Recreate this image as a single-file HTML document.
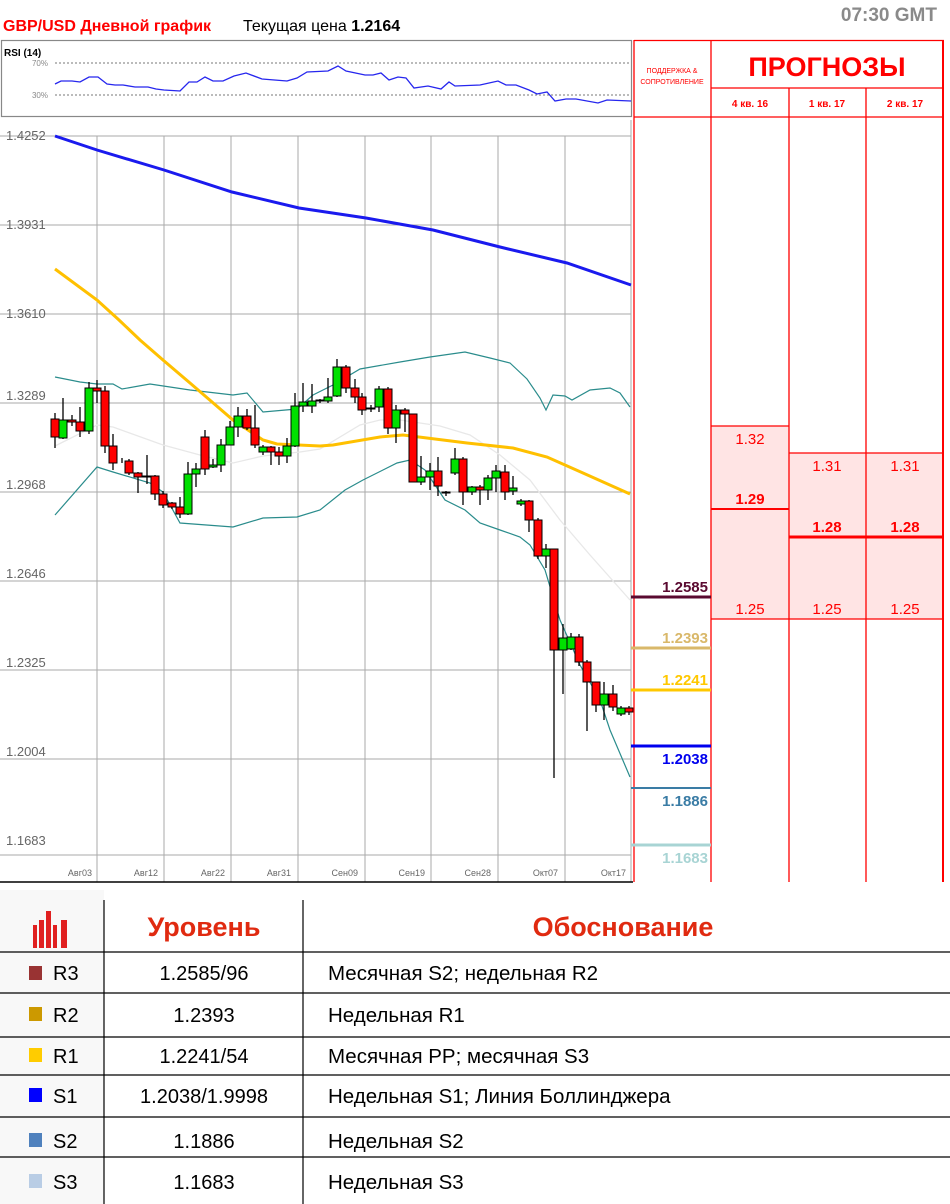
<!DOCTYPE html>
<html><head><meta charset="utf-8"><style>
body{margin:0;width:950px;height:1204px;background:#fff;overflow:hidden;font-family:"Liberation Sans","DejaVu Sans",sans-serif;position:relative}
.a{position:absolute;white-space:nowrap}
</style></head><body>
<svg class="a" style="left:0;top:0" width="950" height="890" xmlns="http://www.w3.org/2000/svg" font-family="Liberation Sans, DejaVu Sans, sans-serif">
<text x="3" y="31" font-size="16" font-weight="bold" fill="#ff0000">GBP/USD Дневной график</text>
<text x="243" y="31" font-size="16" fill="#000">Текущая цена <tspan font-weight="bold">1.2164</tspan></text>
<text x="937" y="21" font-size="19" font-weight="bold" fill="#8a8a8a" text-anchor="end">07:30 GMT</text>
<rect x="1.5" y="40.5" width="630" height="76" fill="#fff" stroke="#888" stroke-width="1.2"/>
<text x="4" y="56" font-size="10" font-weight="bold" fill="#000">RSI (14)</text>
<text x="48" y="66" font-size="8" fill="#888" text-anchor="end">70%</text>
<text x="48" y="98" font-size="8" fill="#888" text-anchor="end">30%</text>
<line x1="55" y1="63" x2="631" y2="63" stroke="#777" stroke-dasharray="2,2"/>
<line x1="55" y1="95" x2="631" y2="95" stroke="#777" stroke-dasharray="2,2"/>
<polyline fill="none" stroke="#2626ee" stroke-width="1.3" points="55,84 61,81 72,81 80,82 89,77 98,77 107,84 115,85 123,85 135,87 148,87 156,89 164,90 180,91 189,82 197,82 205,77 213,81 223,81 234,76 246,73 262,79 287,81 297,78 307,72 328,71 338,66 346,71 365,75 373,75 381,73 389,80 398,77 406,78 414,88 428,86 441,89 449,82 455,86 480,85 498,81 506,85 516,85 529,90 537,94 547,92 555,101 566,99 576,99 598,103 607,100 631,101"/>
<g stroke="#aaa" stroke-width="1">
<line x1="0" y1="136" x2="631" y2="136"/><line x1="0" y1="225" x2="631" y2="225"/><line x1="0" y1="314" x2="631" y2="314"/><line x1="0" y1="403" x2="631" y2="403"/><line x1="0" y1="492" x2="631" y2="492"/><line x1="0" y1="581" x2="631" y2="581"/><line x1="0" y1="670" x2="631" y2="670"/><line x1="0" y1="759" x2="631" y2="759"/><line x1="0" y1="855" x2="631" y2="855"/>
<line x1="97" y1="136" x2="97" y2="882"/><line x1="164" y1="136" x2="164" y2="882"/><line x1="231" y1="136" x2="231" y2="882"/><line x1="298" y1="136" x2="298" y2="882"/><line x1="365" y1="136" x2="365" y2="882"/><line x1="431" y1="136" x2="431" y2="882"/><line x1="498" y1="136" x2="498" y2="882"/><line x1="565" y1="136" x2="565" y2="882"/><line x1="631" y1="120" x2="631" y2="882"/>
</g>
<line x1="0" y1="882" x2="633" y2="882" stroke="#000" stroke-width="1.5"/>
<g font-size="13" fill="#666">
<text x="6" y="140">1.4252</text><text x="6" y="229">1.3931</text><text x="6" y="318">1.3610</text><text x="6" y="400">1.3289</text><text x="6" y="489">1.2968</text><text x="6" y="578">1.2646</text><text x="6" y="667">1.2325</text><text x="6" y="756">1.2004</text><text x="6" y="845">1.1683</text>
</g>
<g font-size="9" fill="#666" text-anchor="end">
<text x="92" y="876">Авг03</text><text x="158" y="876">Авг12</text><text x="225" y="876">Авг22</text><text x="291" y="876">Авг31</text><text x="358" y="876">Сен09</text><text x="425" y="876">Сен19</text><text x="491" y="876">Сен28</text><text x="558" y="876">Окт07</text><text x="626" y="876">Окт17</text>
</g>
<polyline fill="none" stroke="#1a1aee" stroke-width="3" points="55,136 97,150 164,170 232,192 299,208 366,218 433,230 500,247 567,263 631,285"/>
<polyline fill="none" stroke="#e8e8e8" stroke-width="1.3" points="55,446 97,425 113,427 163,445 200,455 233,463 263,456 300,452 320,449 360,425 380,420 400,420 440,426 470,435 500,455 530,480 560,520 590,555 630,600"/>
<polyline fill="none" stroke="#2a8c8c" stroke-width="1.2" points="55,377 80,382 97,384 113,384 122,389 150,384 190,390 233,395 247,393 263,412 297,409 313,395 333,385 360,369 400,362 430,357 465,352 490,358 510,363 527,379 540,398 546,410 553,395 565,396 572,400 590,390 610,388 620,393 630,407"/>
<polyline fill="none" stroke="#2a8c8c" stroke-width="1.2" points="55,515 97,467 113,472 150,483 163,492 180,523 233,527 263,518 297,517 320,510 345,490 363,480 397,463 410,460 425,470 445,500 465,510 480,523 500,530 520,537 530,545 545,570 560,620 580,665 600,700 610,730 630,777"/>
<polyline fill="none" stroke="#ffc000" stroke-width="3" points="55,269 97,300 119,320 140,340 163,360 190,383 233,420 263,440 277,444 320,446 333,445 380,437 403,435 467,443 513,448 547,457 583,473 630,494"/>
<path fill="none" stroke="#000" stroke-width="1.3" d="M55 413V448M63 398V439M72 415V426M80 407V437M89 382V434M97 380V403M105 386V453M113 434V470M122 458V463M129 459V475M138 472V493M147 455V484M155 475V500M163 491V508M172 502V509M180 497V518M188 462V515M196 463V487M205 430V475M213 459V468M221 439V472M230 421V445M238 407V437M247 409V430M255 405V448M263 445V455M271 446V465M279 447V465M287 438V463M295 393V447M303 383V412M312 384V413M320 399V403M328 378V403M337 359V397M346 365V393M355 379V403M362 393V415M371 405V412M379 386V412M388 387V434M396 405V443M405 408V432M413 414V482M421 456V485M430 463V490M438 457V496M446 491V496M455 448V475M463 457V505M472 486V495M480 485V505M488 475V500M496 465V492M505 465V500M513 476V495M521 499V506M529 500V532M538 518V559M546 544V568M554 549V778M563 624V694M571 633V650M579 634V666M587 660V731M596 682V712M604 682V720M613 685V711M621 706V716M629 706V715"/>
<g stroke="#000" stroke-width="1">
<g fill="#ff0000">
<rect x="51" y="419" width="8" height="18"/><rect x="68" y="420" width="8" height="2"/><rect x="76" y="422" width="8" height="9"/><rect x="93" y="388" width="8" height="3"/><rect x="101" y="391" width="8" height="55"/><rect x="109" y="446" width="8" height="17"/><rect x="125" y="461" width="8" height="12"/><rect x="134" y="473" width="8" height="4"/><rect x="151" y="476" width="8" height="18"/><rect x="159" y="494" width="8" height="11"/><rect x="168" y="503" width="8" height="4"/><rect x="176" y="507" width="8" height="7"/><rect x="201" y="437" width="8" height="32"/><rect x="243" y="416" width="8" height="12"/><rect x="251" y="428" width="8" height="17"/><rect x="267" y="447" width="8" height="5"/><rect x="275" y="452" width="8" height="4"/><rect x="342" y="367" width="8" height="21"/><rect x="351" y="388" width="8" height="9"/><rect x="358" y="397" width="8" height="13"/><rect x="384" y="389" width="8" height="39"/><rect x="401" y="410" width="8" height="4"/><rect x="409" y="414" width="8" height="68"/><rect x="434" y="471" width="8" height="15"/><rect x="459" y="459" width="8" height="33"/><rect x="476" y="487" width="8" height="3"/><rect x="501" y="472" width="8" height="20"/><rect x="525" y="501" width="8" height="19"/><rect x="534" y="520" width="8" height="36"/><rect x="550" y="549" width="8" height="101"/><rect x="575" y="637" width="8" height="25"/><rect x="583" y="662" width="8" height="20"/><rect x="592" y="682" width="8" height="23"/><rect x="609" y="694" width="8" height="13"/><rect x="625" y="708" width="8" height="4"/>
</g>
<g fill="#00e000">
<rect x="59" y="420" width="8" height="18"/><rect x="85" y="388" width="8" height="43"/><rect x="143" y="476" width="8" height="1"/><rect x="184" y="474" width="8" height="40"/><rect x="192" y="469" width="8" height="5"/><rect x="209" y="465" width="8" height="2"/><rect x="217" y="445" width="8" height="20"/><rect x="226" y="427" width="8" height="18"/><rect x="234" y="416" width="8" height="11"/><rect x="259" y="447" width="8" height="5"/><rect x="283" y="446" width="8" height="10"/><rect x="291" y="406" width="8" height="40"/><rect x="299" y="402" width="8" height="4"/><rect x="308" y="401" width="8" height="5"/><rect x="316" y="400" width="8" height="1"/><rect x="324" y="397" width="8" height="4"/><rect x="333" y="367" width="8" height="29"/><rect x="367" y="408" width="8" height="1"/><rect x="375" y="389" width="8" height="18"/><rect x="392" y="410" width="8" height="18"/><rect x="417" y="477" width="8" height="5"/><rect x="426" y="471" width="8" height="6"/><rect x="442" y="492" width="8" height="1"/><rect x="451" y="459" width="8" height="14"/><rect x="468" y="487" width="8" height="5"/><rect x="484" y="478" width="8" height="12"/><rect x="492" y="471" width="8" height="7"/><rect x="509" y="488" width="8" height="3"/><rect x="517" y="501" width="8" height="3"/><rect x="542" y="549" width="8" height="7"/><rect x="559" y="638" width="8" height="12"/><rect x="567" y="637" width="8" height="12"/><rect x="600" y="694" width="8" height="11"/><rect x="617" y="708" width="8" height="6"/>
</g></g>
<rect x="711" y="426" width="78" height="193" fill="#ffe4e4"/>
<rect x="789" y="453" width="154" height="166" fill="#ffe4e4"/>
<g stroke="#ff0000" stroke-width="1.3">
<line x1="634" y1="40" x2="634" y2="882"/><line x1="711" y1="40" x2="711" y2="882"/><line x1="789" y1="88" x2="789" y2="882"/><line x1="866" y1="88" x2="866" y2="882"/>
<line x1="634" y1="40.5" x2="944" y2="40.5"/><line x1="711" y1="88" x2="944" y2="88"/><line x1="634" y1="117" x2="944" y2="117"/>
<line x1="711" y1="426" x2="789" y2="426"/><line x1="789" y1="453" x2="943" y2="453"/><line x1="711" y1="619" x2="943" y2="619"/>
</g>
<line x1="943" y1="40" x2="943" y2="882" stroke="#ff0000" stroke-width="2"/>
<line x1="711" y1="509" x2="789" y2="509" stroke="#ff0000" stroke-width="2"/>
<line x1="789" y1="537" x2="943" y2="537" stroke="#ff0000" stroke-width="3"/>
<text x="672" y="73" font-size="7" fill="#ff0000" text-anchor="middle">ПОДДЕРЖКА &amp;</text>
<text x="672" y="84" font-size="7" fill="#ff0000" text-anchor="middle">СОПРОТИВЛЕНИЕ</text>
<text x="827" y="76" font-size="27" font-weight="bold" fill="#ff0000" text-anchor="middle">ПРОГНОЗЫ</text>
<g font-size="10" font-weight="bold" fill="#ff0000" text-anchor="middle">
<text x="750" y="107">4 кв. 16</text><text x="827" y="107">1 кв. 17</text><text x="905" y="107">2 кв. 17</text></g>
<g font-size="15" fill="#ff0000" text-anchor="middle">
<text x="750" y="444">1.32</text><text x="750" y="614">1.25</text>
<text x="827" y="471">1.31</text><text x="827" y="614">1.25</text>
<text x="905" y="471">1.31</text><text x="905" y="614">1.25</text>
<text x="750" y="504" font-weight="bold">1.29</text><text x="827" y="532" font-weight="bold">1.28</text><text x="905" y="532" font-weight="bold">1.28</text>
</g>
<g stroke-width="3">
<line x1="631" y1="597" x2="711" y2="597" stroke="#5a0a30"/>
<line x1="631" y1="648" x2="711" y2="648" stroke="#d9b86a"/>
<line x1="631" y1="690" x2="711" y2="690" stroke="#ffc800"/>
<line x1="631" y1="746" x2="711" y2="746" stroke="#0000ee"/>
<line x1="631" y1="788" x2="711" y2="788" stroke="#3a7ca5" stroke-width="2"/>
<line x1="631" y1="845" x2="711" y2="845" stroke="#a8d4d4"/>
</g>
<g font-size="15" font-weight="bold" text-anchor="end">
<text x="708" y="592" fill="#5a0a30">1.2585</text>
<text x="708" y="643" fill="#d9b86a">1.2393</text>
<text x="708" y="685" fill="#ffc800">1.2241</text>
<text x="708" y="764" fill="#0000ee">1.2038</text>
<text x="708" y="806" fill="#3a7ca5">1.1886</text>
<text x="708" y="863" fill="#a8d4d4">1.1683</text>
</g>
</svg>
<svg class="a" style="left:0;top:890px" width="950" height="314" xmlns="http://www.w3.org/2000/svg" font-family="Liberation Sans, DejaVu Sans, sans-serif">
<rect x="0" y="0" width="104" height="314" fill="#f8f8f8"/>
<g fill="#e02020">
<rect x="33" y="35" width="4" height="23"/><rect x="39" y="30" width="5" height="28"/><rect x="46" y="21" width="5" height="37"/><rect x="53" y="35" width="4" height="23"/><rect x="61" y="30" width="6" height="28"/>
</g>
<g stroke="#000" stroke-width="1.2">
<line x1="104" y1="10" x2="104" y2="314"/><line x1="303" y1="10" x2="303" y2="314"/>
<line x1="0" y1="62" x2="950" y2="62"/><line x1="0" y1="103" x2="950" y2="103"/><line x1="0" y1="147" x2="950" y2="147"/><line x1="0" y1="185" x2="950" y2="185"/><line x1="0" y1="227" x2="950" y2="227"/><line x1="0" y1="267" x2="950" y2="267"/>
</g>
<text x="204" y="46" font-size="27" font-weight="bold" fill="#e02a10" text-anchor="middle">Уровень</text>
<text x="623" y="46" font-size="27" font-weight="bold" fill="#e02a10" text-anchor="middle">Обоснование</text>
<rect x="29" y="76" width="13" height="14" fill="#993333"/>
<rect x="29" y="117" width="13" height="14" fill="#cc9900"/>
<rect x="29" y="158" width="13" height="14" fill="#ffcc00"/>
<rect x="29" y="198" width="13" height="14" fill="#0000ff"/>
<rect x="29" y="243" width="13" height="14" fill="#4f81bd"/>
<rect x="29" y="284" width="13" height="14" fill="#b9cde5"/>
<g font-size="20" fill="#000">
<text x="53" y="90">R3</text><text x="53" y="132">R2</text><text x="53" y="173">R1</text><text x="53" y="213">S1</text><text x="53" y="258">S2</text><text x="53" y="299">S3</text>
</g>
<g font-size="20" fill="#000" text-anchor="middle">
<text x="204" y="90">1.2585/96</text><text x="204" y="132">1.2393</text><text x="204" y="173">1.2241/54</text><text x="204" y="213">1.2038/1.9998</text><text x="204" y="258">1.1886</text><text x="204" y="299">1.1683</text>
</g>
<g font-size="20.5" fill="#000">
<text x="328" y="90">Месячная S2; недельная R2</text><text x="328" y="132">Недельная R1</text><text x="328" y="173">Месячная PP; месячная S3</text><text x="328" y="213">Недельная S1; Линия Боллинджера</text><text x="328" y="258">Недельная S2</text><text x="328" y="299">Недельная S3</text>
</g>
</svg>
</body></html>
